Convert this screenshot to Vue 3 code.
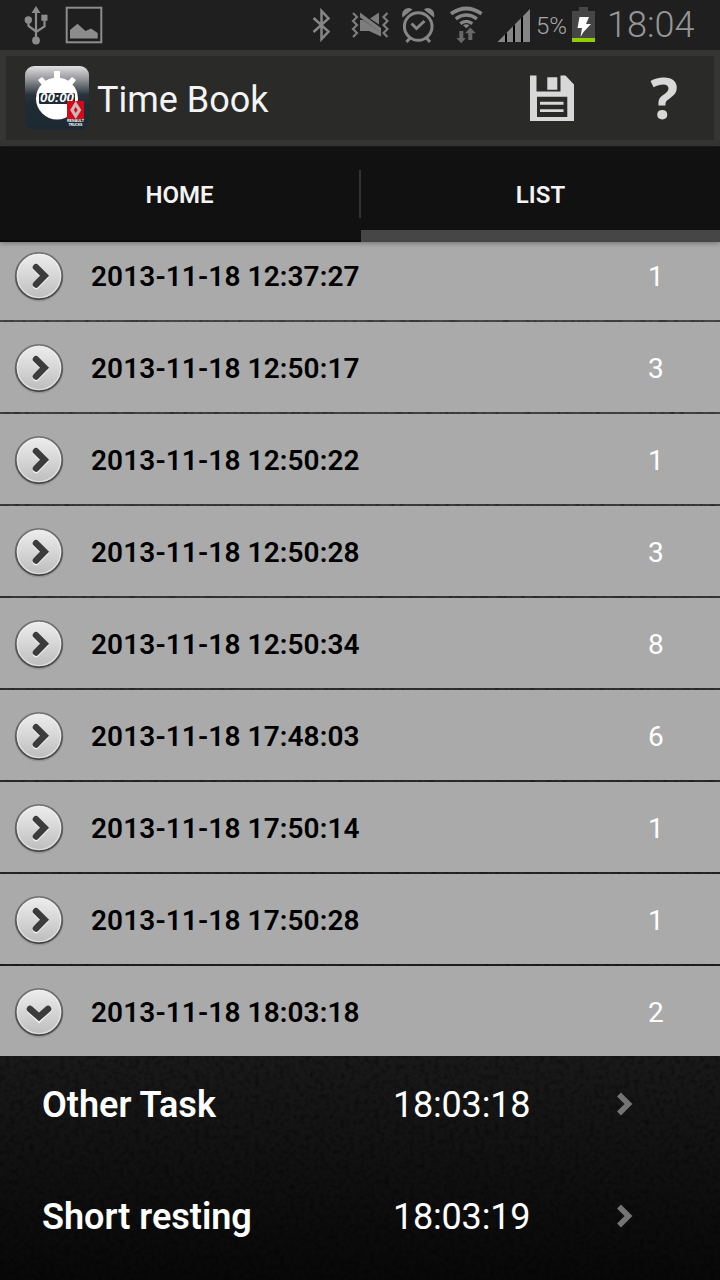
<template>
	<div class="screen">
		<svg class="leather" width="720" height="1280">
			<filter id="grain" x="0" y="0" width="100%" height="100%">
				<feTurbulence type="fractalNoise" baseFrequency="0.2" numOctaves="2" seed="4" />
				<feColorMatrix values="0 0 0 0 0  0 0 0 0 0  0 0 0 0 0  2.6 0 0 0 -1.15" />
			</filter>
			<rect width="720" height="1280" filter="url(#grain)" />
		</svg>

		<header class="status-bar">
			<div class="status-left">
				<svg width="26" height="50" viewBox="23 0 26 50">
					<path d="M36 6l4.500 7h-9z" fill="#8c8c8c" />
					<path d="M36 12v27M28.500 20v6l7.500 5.500M44.500 19v7.500l-8.500 5.500" fill="none" stroke="#8c8c8c" stroke-width="2.200" />
					<circle cx="28.300" cy="20" r="3.700" fill="#8c8c8c" />
					<circle cx="36" cy="40.500" r="3.900" fill="#8c8c8c" />
					<path d="M41.300 14.700h6.200v6h-6.200z" fill="#8c8c8c" />
				</svg>
				<svg width="38" height="50" viewBox="65 0 38 50">
					<rect x="66.700" y="7.700" width="34.600" height="34.600" fill="none" stroke="#8c8c8c" stroke-width="2" />
					<path d="M70 38.500v-8.500l7.500-6.200 8 7.200 5.500-2.600 6.700 4.600v5.500z" fill="#8c8c8c" />
				</svg>
			</div>
			<div class="status-right">
				<svg width="20" height="50" viewBox="311 0 20 50">
					<path d="M313.500 18l15 13.500-7 7.500v-28l7 7.500-15 13.500" fill="none" stroke="#868686" stroke-width="2.500" />
				</svg>
				<svg width="38" height="50" viewBox="351 0 38 50">
					<path
						d="M353 13l4 4-4 4 4 4-4 4 4 4-4 4M387.500 13l-4 4 4 4-4 4 4 4-4 4 4 4"
						fill="none"
						stroke="#7d7d7d"
						stroke-width="2.200"
					/>
					<path d="M379 12.500v12l-9-6zM360 12.500l21 15.500v4.500l-21-15zM360 20h3l18 12.500v4l-12-5.500h-9z" fill="#7d7d7d" />
				</svg>
				<svg width="34" height="50" viewBox="401 0 34 50">
					<circle cx="418.200" cy="26.500" r="13.800" fill="none" stroke="#868686" stroke-width="3" />
					<path d="M411.500 23.500l5 5 8-7.500" fill="none" stroke="#868686" stroke-width="3" />
					<path d="M410 38l-3.500 4M426.500 38l3.500 4" stroke="#868686" stroke-width="3" />
					<path
						d="M402.500 17.500c-1.500-5 1.500-9.500 6.500-9.500q2 0 3.500 1.500zM433.900 17.500c1.500-5-1.500-9.500-6.500-9.500q-2 0-3.500 1.500z"
						fill="#868686"
					/>
				</svg>
				<svg width="34" height="50" viewBox="449 0 34 50">
					<path d="M451 13.700q15.300-10.500 30.600 0" fill="none" stroke="#868686" stroke-width="3.800" />
					<path d="M455.700 18.800q10.600-7.600 21.200 0M460.300 23.600q6-4.500 12 0" fill="none" stroke="#868686" stroke-width="3.300" />
					<path d="M463 25.300q3.300-2 6.600 0l-3.300 3z" fill="#868686" />
					<path d="M459.300 31h4v7h2.500l-4.500 5.200-5-5.200h3z" fill="#686868" />
					<path d="M470.300 27.500l5.500 5.700h-3.500v6.800h-4v-6.800h-3.300z" fill="#686868" />
				</svg>
				<svg width="33" height="50" viewBox="497 0 33 50">
					<path d="M497.500 42L530 9v33z" fill="#858585" />
					<path d="M505 34.400l2-2v9.600h-2zM513 26.300l2-2v17.700h-2zM521 18.100l2-2v25.900h-2z" fill="#000" />
				</svg>
				<span class="battery-level">5%</span>
				<svg width="23" height="50" viewBox="572 0 23 50">
					<path d="M572 11h7v-4h9v4h7v31h-23z" fill="#464646" />
					<path d="M572 38h23v4h-23z" fill="#91cf00" />
					<path d="M579.500 17h9.500l-3 7h5l-7.500 8-3 5 1.500-9h-4.500z" fill="#fff" />
				</svg>
				<span class="clock">18:04</span>
			</div>
		</header>

		<div class="action-bar">
			<div class="action-inner">
				<svg class="app-icon" width="64" height="64" viewBox="25 66 64 64">
					<defs>
						<linearGradient id="tile" x1="0" y1="0" x2="0" y2="1">
							<stop offset="0" stop-color="#e0e0e2" />
							<stop offset="0.200" stop-color="#98999d" />
							<stop offset="0.450" stop-color="#28333b" />
							<stop offset="0.600" stop-color="#202c34" />
							<stop offset="1" stop-color="#1d2932" />
						</linearGradient>
					</defs>
					<rect x="25" y="66" width="64" height="64" rx="9" fill="url(#tile)" />
					<circle cx="57" cy="98.500" r="21" fill="#fff" />
					<path d="M54 71h6v9h-6zM38 80l4-3 4 4-1 4-4-1zM76 80l-4-3-4 4 1 4 4-1z" fill="#fff" />
					<rect x="39" y="93" width="36" height="11" rx="1.500" fill="#202c34" />
					<text x="57" y="102.300" class="lcd" text-anchor="middle" textLength="34" lengthAdjust="spacingAndGlyphs">00:00</text>
					<path d="M67 101h17v18h-17z" fill="#d80718" />
					<path d="M75.700 104l3.700 6-3.700 6-3.700-6z" fill="none" stroke="#c4bcbc" stroke-width="3.200" />
					<text x="75.500" y="122.300" class="brand" text-anchor="middle" textLength="17">RENAULT</text>
					<text x="75.500" y="125.500" class="brand" text-anchor="middle" textLength="14">TRUCKS</text>
				</svg>
				<h1 class="title">Time Book</h1>
				<button class="action save" aria-label="Save">
					<svg width="44" height="46" viewBox="530 75 44 46">
						<path
							fill-rule="evenodd"
							d="M530 75.500h6.500v16h24v-16h5l8.500 9v36.500h-44zM537 96.700v20.300h30.300v-20.300z"
							fill="#d8d8d8"
						/>
						<path d="M547.300 77.300h10v12.500h-10zM540 101.800h23.500v2.900h-23.500zM540 109.200h23.500v2.900h-23.500z" fill="#d8d8d8" />
					</svg>
				</button>
				<button class="action help">?</button>
			</div>
		</div>

		<nav class="tabs">
			<button
				v-for="tab in tabs"
				:key="tab"
				class="tab"
				:class="{ active: tab === activeTab }"
				@click="activeTab = tab"
			>
				<span>{{ tab }}</span>
			</button>
		</nav>

		<main class="list">
			<div v-for="(entry, index) in entries" :key="entry.date" class="group">
				<div class="group-row" @click="toggle(index)">
					<svg class="expander" width="52" height="54" viewBox="-26 -26 52 54">
						<defs>
							<linearGradient id="knob" x1="0" y1="0" x2="0" y2="1">
								<stop offset="0" stop-color="#eeeeee" />
								<stop offset="0.500" stop-color="#d6d6d6" />
								<stop offset="1" stop-color="#bcbcbc" />
							</linearGradient>
							<linearGradient id="rim" x1="0" y1="0" x2="0" y2="1">
								<stop offset="0" stop-color="#777" />
								<stop offset="1" stop-color="#444" />
							</linearGradient>
						</defs>
						<circle cy="1" r="24.500" fill="#888" opacity="0.600" />
						<circle r="23.200" fill="url(#knob)" stroke="url(#rim)" stroke-width="1.800" />
						<circle r="21.600" fill="none" stroke="#f2f2f2" stroke-width="1.200" opacity="0.600" />
						<g fill="none" stroke-width="6.500" stroke-linecap="round">
							<template v-if="index === expanded">
								<path d="M-9 -3L0 5.500L9 -3" stroke="#f0f0f0" transform="translate(0 1.500)" />
								<path d="M-9 -3L0 5L9 -3" stroke="#3c3c3c" />
							</template>
							<template v-else>
								<path d="M-3 -8.700L5.500 -0.300L-3 8.500" stroke="#f0f0f0" transform="translate(0 1.500)" />
								<path d="M-3 -8.700L5.500 -0.300L-3 8.500" stroke="#3c3c3c" />
							</template>
						</g>
					</svg>
					<span class="date">{{ entry.date }}</span>
					<span class="count">{{ entry.count }}</span>
				</div>
				<template v-if="index === expanded">
					<div v-for="task in tasks" :key="task.time" class="task">
						<span class="task-name">{{ task.name }}</span>
						<span class="task-time">{{ task.time }}</span>
						<svg width="20" height="28" viewBox="0 0 20 28">
							<path d="M3 3.500l9.500 9.500L3 22.500" fill="none" stroke="#747474" stroke-width="5.500" />
						</svg>
					</div>
				</template>
			</div>
		</main>
	</div>
</template>

<script setup>
import { ref } from "vue";

const tabs = ["HOME", "LIST"];
const activeTab = ref("LIST");

const entries = [
	{ date: "2013-11-18 12:37:27", count: 1 },
	{ date: "2013-11-18 12:50:17", count: 3 },
	{ date: "2013-11-18 12:50:22", count: 1 },
	{ date: "2013-11-18 12:50:28", count: 3 },
	{ date: "2013-11-18 12:50:34", count: 8 },
	{ date: "2013-11-18 17:48:03", count: 6 },
	{ date: "2013-11-18 17:50:14", count: 1 },
	{ date: "2013-11-18 17:50:28", count: 1 },
	{ date: "2013-11-18 18:03:18", count: 2 },
];

const tasks = [
	{ name: "Other Task", time: "18:03:18" },
	{ name: "Short resting", time: "18:03:19" },
];

const expanded = ref(8);
const toggle = index => {
	expanded.value = expanded.value === index ? -1 : index;
};
</script>

<style>
body {
	background: #0a0a0a;
}
</style>

<style scoped>
.screen {
	position: relative;
	width: 720px;
	height: 1280px;
	overflow: hidden;
	display: flex;
	flex-direction: column;
	font-family: Roboto, "Noto Sans", sans-serif;
	background: linear-gradient(#565656 0, #484848 320px, #211f21 965px, #191919 1056px, #080808 1280px);
}
.leather {
	position: absolute;
	left: 0;
	top: 0;
	opacity: 0.35;
}
svg {
	display: block;
	flex: none;
}
button {
	padding: 0;
	border: 0;
	background: none;
	font-family: inherit;
}

.status-bar {
	position: relative;
	flex: none;
	height: 50px;
	display: flex;
	justify-content: space-between;
	padding: 0 25px 0 23px;
	background: #1f1f1f;
	color: #8e8e8e;
}
.status-left {
	display: flex;
	gap: 16px;
}
.status-right {
	display: flex;
}
.status-right svg + svg {
	margin-left: 14px;
}
.status-right svg:nth-child(2) {
	margin-left: 20px;
}
.status-right svg:nth-child(3) {
	margin-left: 12px;
}
.battery-level {
	width: 36px;
	margin-left: 6px;
	font-size: 24px;
	line-height: 52px;
	color: #a8a8a8;
	font-weight: 300;
	white-space: nowrap;
}
.clock {
	width: 88px;
	margin-left: 12px;
	font-size: 36px;
	line-height: 50px;
	font-weight: 300;
	color: #969696;
	white-space: nowrap;
}

.action-bar {
	position: relative;
	flex: none;
	box-sizing: border-box;
	height: 97px;
	padding: 6px;
	background: #353533;
	border-bottom: 1px solid #1c1c1c;
}
.action-inner {
	height: 84px;
	display: flex;
	align-items: center;
	background: #2a2a29;
}
.app-icon {
	margin-left: 19px;
}
.lcd {
	font: italic bold 12px "Liberation Sans", sans-serif;
	fill: #fff;
}
.brand {
	font: bold 3.6px "Liberation Sans", sans-serif;
	fill: #fff;
}
.title {
	flex: 1;
	margin: 0 0 0 8px;
	font-size: 36px;
	font-weight: 400;
	line-height: 42px;
	color: #f3f3f3;
	padding-top: 3px;
}
.action {
	color: #d8d8d8;
}
.save {
	margin-right: 76px;
}
.help {
	width: 28px;
	margin-right: 36px;
	padding-bottom: 3px;
	font: bold 58px/60px "Noto Sans", sans-serif;
}

.tabs {
	position: relative;
	z-index: 1;
	flex: none;
	height: 95px;
	display: flex;
	background: #111;
	box-shadow: 0 1px 5px rgba(0, 0, 0, 0.35);
}
.tab {
	flex: 1;
	box-sizing: border-box;
	display: flex;
	align-items: center;
	color: #f3f3f3;
	font-size: 24px;
	font-weight: 600;
	border-bottom: 2px solid #090909;
}
.tab span {
	flex: 1;
	box-sizing: border-box;
	height: 48px;
	line-height: 50px;
}
.tab:first-child {
	flex: 0 0 361px;
}
.tab:first-child span {
	border-right: 2px solid #333;
}
.tab.active {
	border-bottom: 12px solid #464646;
	padding-top: 10px;
}

.list {
	position: relative;
	margin-top: -12px;
}
.group + .group {
	margin-top: 2px;
}
.group-row {
	height: 90px;
	display: flex;
	align-items: center;
	padding-left: 13px;
	background: #aaa;
}
.expander {
	margin-top: 4px;
}
.date {
	width: 557px;
	margin-left: 26px;
	font-size: 28px;
	font-weight: 600;
	letter-spacing: 0.1px;
	color: #000;
}
.count {
	font-size: 28px;
	color: #fff;
}
.date,
.count {
	padding-top: 2px;
}

.task {
	height: 112px;
	box-sizing: border-box;
	display: flex;
	align-items: center;
	padding: 0 0 14px 42px;
	color: #fff;
	font-size: 36px;
}
.task-name {
	width: 351px;
	font-weight: 600;
}
.task-time {
	width: 223px;
	letter-spacing: -0.2px;
}
</style>
